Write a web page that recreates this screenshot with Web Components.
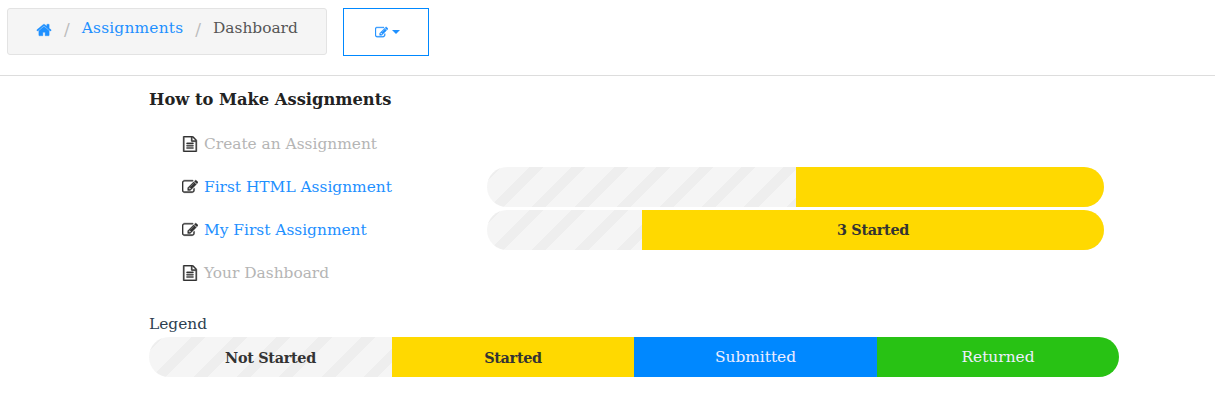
<!DOCTYPE html>
<html>
<head>
<meta charset="utf-8">
<title>Dashboard</title>
<style>
  html, body { margin: 0; padding: 0; background: #fff; }
  body { font-family: "DejaVu Serif", serif; font-size: 15.4px; color: #333; }
</style>
</head>
<body>
<top-bar>
  <crumb-trail>
    <a-crumb icon="home"></a-crumb>
    <a-crumb link>Assignments</a-crumb>
    <a-crumb>Dashboard</a-crumb>
  </crumb-trail>
  <edit-button></edit-button>
</top-bar>
<main-panel>
  <step-list title="How to Make Assignments">
    <step-row icon="file">Create an Assignment</step-row>
    <step-row icon="edit" link start="309">First HTML Assignment</step-row>
    <step-row icon="edit" link start="155" label="3 Started">My First Assignment</step-row>
    <step-row icon="file">Your Dashboard</step-row>
  </step-list>
  <status-legend></status-legend>
</main-panel>

<script>
const ICONS = {
  home: 'M1472 992v480q0 26-19 45t-45 19h-384v-384h-256v384h-384q-26 0-45-19t-19-45v-480q0-1 .5-3t.5-3l575-474 575 474q1 2 1 6zm223-69l-62 74q-8 9-21 11h-3q-13 0-21-7l-692-577-692 577q-12 8-24 7-13-2-21-11l-62-74q-8-10-7-23.500t11-21.500l719-599q32-26 76-26t76 26l244 204v-195q0-14 9-23t23-9h192q14 0 23 9t9 23v408l219 182q10 8 11 21.500t-7 23.500z',
  edit: 'M888 1184l116-116-152-152-116 116v56h96v96h56zm440-720q-16-16-33 1l-350 350q-17 17-1 33t33-1l350-350q17-17 1-33zm80 594v190q0 119-84.500 203.500t-203.500 84.500h-832q-119 0-203.500-84.500t-84.500-203.500v-832q0-119 84.500-203.500t203.500-84.500h832q63 0 117 25 15 7 18 23 3 17-9 29l-49 49q-14 14-32 8-23-6-45-6h-832q-66 0-113 47t-47 113v832q0 66 47 113t113 47h832q66 0 113-47t47-113v-126q0-13 9-22l64-64q15-15 35-7t20 29zm-96-738l288 288-672 672h-288v-288zm444 132l-92 92-288-288 92-92q28-28 68-28t68 28l152 152q28 28 28 68t-28 68z',
  file: 'M1596 380q28 28 48 76t20 88v1152q0 40-28 68t-68 28h-1344q-40 0-68-28t-28-68v-1600q0-40 28-68t68-28h896q40 0 88 20t76 48zm-444-244v376h376q-10-29-22-41l-313-313q-12-12-41-22zm384 1528v-1024h-416q-40 0-68-28t-28-68v-416h-768v1536h1280zm-1024-864q0-14 9-23t23-9h704q14 0 23 9t9 23v64q0 14-9 23t-23 9h-704q-14 0-23-9t-9-23v-64zm736 224q14 0 23 9t9 23v64q0 14-9 23t-23 9h-704q-14 0-23-9t-9-23v-64q0-14 9-23t23-9h704zm0 256q14 0 23 9t9 23v64q0 14-9 23t-23 9h-704q-14 0-23-9t-9-23v-64q0-14 9-23t23-9h704z'
};
const icon = (name, size) => `<svg width="${size}" height="${size}" viewBox="0 0 1792 1792" fill="currentColor" stroke="currentColor" stroke-width="45" aria-hidden="true"><path d="${ICONS[name]}"/></svg>`;
const STRIPES = 'repeating-linear-gradient(135deg, #eee 0 10px, #f5f5f5 10px 30px)';

class TopBar extends HTMLElement {
  constructor() {
    super();
    this.attachShadow({ mode: 'open' }).innerHTML = `
      <style>
        :host { display: flex; align-items: flex-start; gap: 16px; height: 67px; padding: 8px 0 0 7px; border-bottom: 1px solid #ddd; }
      </style>
      <slot></slot>`;
  }
}

class CrumbTrail extends HTMLElement {
  constructor() {
    super();
    this.attachShadow({ mode: 'open' }).innerHTML = `
      <style>
        :host { display: flex; align-items: center; box-sizing: border-box; width: 320px; height: 47px; padding: 0 0 7px 28px; background: #f5f5f5; border: 1px solid #e3e3e3; border-radius: 3px; }
      </style>
      <slot></slot>`;
  }
}

class ACrumb extends HTMLElement {
  constructor() {
    super();
    const name = this.getAttribute('icon');
    this.attachShadow({ mode: 'open' }).innerHTML = `
      <style>
        :host { display: inline-flex; align-items: center; color: #555; }
        :host([link]), :host([icon]) { color: #1e90ff; }
        :host([link]) span { letter-spacing: .2px; }
        svg { display: block; margin-top: 3px; }
        .sep { color: #bbb; font-style: normal; font-size: 17px; margin: 2px 12px 0 12px; }
        :host(:last-child) .sep { display: none; }
      </style>
      ${name ? icon(name, 16) : '<span><slot></slot></span>'}<i class="sep">/</i>`;
  }
}

class EditButton extends HTMLElement {
  constructor() {
    super();
    this.attachShadow({ mode: 'open' }).innerHTML = `
      <style>
        :host { display: flex; align-items: center; justify-content: center; gap: 4px; box-sizing: border-box; width: 86px; height: 48px; padding-left: 2px; border: 1px solid #0088ff; color: #1e90ff; }
        svg { display: block; }
        .caret { width: 0; height: 0; border: 4px solid transparent; border-top-color: currentColor; border-bottom: 0; }
      </style>
      ${icon('edit', 13)}<div class="caret"></div>`;
  }
}

class MainPanel extends HTMLElement {
  constructor() {
    super();
    this.attachShadow({ mode: 'open' }).innerHTML = `
      <style>
        :host { display: block; padding: 13px 96px 0 149px; }
      </style>
      <slot></slot>`;
  }
}

class StepList extends HTMLElement {
  constructor() {
    super();
    this.attachShadow({ mode: 'open' }).innerHTML = `
      <style>
        :host { display: block; }
        h2 { margin: 0 0 11px; height: 22px; line-height: 22px; font-size: 16.3px; font-weight: bold; color: #222; }
        .rows { display: flex; flex-direction: column; padding-left: 33px; }
      </style>
      <h2>${this.getAttribute('title')}</h2>
      <div class="rows"><slot></slot></div>`;
  }
}

class StepRow extends HTMLElement {
  constructor() {
    super();
    const start = this.getAttribute('start');
    const label = this.getAttribute('label') || '';
    this.attachShadow({ mode: 'open' }).innerHTML = `
      <style>
        :host { display: grid; grid-template-columns: 305px 617px; align-items: center; height: 43px; color: #b5b5b5; }
        :host([link]) { color: #1e90ff; }
        .name { display: flex; align-items: center; gap: 6px; }
        svg { display: block; color: #333; }
        .bar { display: flex; height: 40px; border-radius: 20px; overflow: hidden; background: ${STRIPES}; }
        .fill { flex: 1; margin-left: ${start}px; display: flex; align-items: center; justify-content: center; background: #ffd900; color: #333; font-weight: bold; font-size: 14.4px; letter-spacing: -.3px; }
      </style>
      <div class="name">${icon(this.getAttribute('icon'), 16)}<span><slot></slot></span></div>
      ${start ? `<div class="bar"><div class="fill">${label}</div></div>` : ''}`;
  }
}

class StatusLegend extends HTMLElement {
  constructor() {
    super();
    this.attachShadow({ mode: 'open' }).innerHTML = `
      <style>
        :host { display: block; margin-top: 19px; }
        .cap { height: 22px; line-height: 22px; margin-bottom: 2px; color: #2c3e50; }
        .bar { display: grid; grid-template-columns: 243px 242px 243px 242px; height: 40px; border-radius: 20px; overflow: hidden; }
        .bar div { display: flex; align-items: center; justify-content: center; }
        .none { background: ${STRIPES}; font-weight: bold; font-size: 14.4px; letter-spacing: -.3px; color: #333; }
        .started { background: #ffd900; font-weight: bold; font-size: 14.4px; letter-spacing: -.3px; color: #333; }
        .submitted { background: #0088ff; color: #eef; }
        .returned { background: #28c214; color: #eef; }
      </style>
      <div class="cap">Legend</div>
      <div class="bar">
        <div class="none">Not Started</div>
        <div class="started">Started</div>
        <div class="submitted">Submitted</div>
        <div class="returned">Returned</div>
      </div>`;
  }
}

customElements.define('top-bar', TopBar);
customElements.define('crumb-trail', CrumbTrail);
customElements.define('a-crumb', ACrumb);
customElements.define('edit-button', EditButton);
customElements.define('main-panel', MainPanel);
customElements.define('step-list', StepList);
customElements.define('step-row', StepRow);
customElements.define('status-legend', StatusLegend);
</script>
</body>
</html>
